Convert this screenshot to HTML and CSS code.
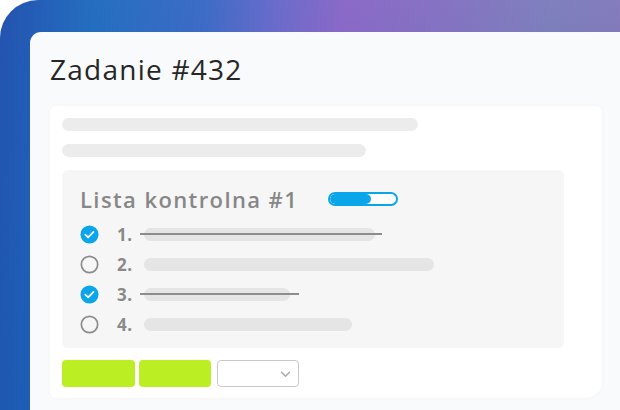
FILE: index.html
```html
<!DOCTYPE html>
<html lang="pl">
<head>
<meta charset="utf-8">
<link rel="stylesheet" href="styles.css">
</head>
<body>
<div class="bg">
  <div class="panel">
    <h1 class="title">Zadanie #432</h1>
    <div class="card">
      <div class="skel skel-1"></div>
      <div class="skel skel-2"></div>
      <div class="checklist">
        <div class="cl-head">
          <span class="cl-title">Lista kontrolna #1</span>
          <span class="progress"><span class="progress-fill"></span></span>
        </div>
        <ul class="items">
          <li class="item done">
            <span class="check"><svg viewBox="0 0 20 20" width="19" height="19"><circle cx="10" cy="10" r="9.5" fill="#0aa6e9"/><path d="M5.6 10.2l3 2.9 5.6-5.8" fill="none" stroke="#fff" stroke-width="1.8" stroke-linecap="round" stroke-linejoin="round"/></svg></span>
            <span class="num">1.</span>
            <span class="line w1"></span>
          </li>
          <li class="item">
            <span class="check"><svg viewBox="0 0 20 20" width="19" height="19"><circle cx="10" cy="10" r="8.6" fill="none" stroke="#8c8c8c" stroke-width="1.8"/></svg></span>
            <span class="num">2.</span>
            <span class="line w2"></span>
          </li>
          <li class="item done">
            <span class="check"><svg viewBox="0 0 20 20" width="19" height="19"><circle cx="10" cy="10" r="9.5" fill="#0aa6e9"/><path d="M5.6 10.2l3 2.9 5.6-5.8" fill="none" stroke="#fff" stroke-width="1.8" stroke-linecap="round" stroke-linejoin="round"/></svg></span>
            <span class="num">3.</span>
            <span class="line w3"></span>
          </li>
          <li class="item">
            <span class="check"><svg viewBox="0 0 20 20" width="19" height="19"><circle cx="10" cy="10" r="8.6" fill="none" stroke="#8c8c8c" stroke-width="1.8"/></svg></span>
            <span class="num">4.</span>
            <span class="line w4"></span>
          </li>
        </ul>
      </div>
      <div class="actions">
        <span class="btn"></span>
        <span class="btn btn-2"></span>
        <span class="select"><svg viewBox="0 0 12 8" width="11" height="7"><path d="M1.5 1.5l4.5 4.5 4.5-4.5" fill="none" stroke="#a8a8a8" stroke-width="1.6" stroke-linecap="round" stroke-linejoin="round"/></svg></span>
      </div>
    </div>
  </div>
</div>
</body>
</html>
```

FILE: styles.css
```css
* { box-sizing: border-box; }
html, body { margin: 0; padding: 0; background: #ffffff; }
body {
  width: 620px;
  height: 410px;
  overflow: hidden;
  font-family: "Open Sans", sans-serif;
}
.bg {
  width: 620px;
  height: 410px;
  border-top-left-radius: 38px;
  overflow: hidden;
  background:
    linear-gradient(180deg, rgba(255,255,255,0) 0%, rgba(10,40,140,0.25) 100%),
    linear-gradient(100deg, #2453b0 0%, #246fc0 14%, #3e6cc6 30%, #6a6ccb 40%, #8b6ac8 50%, #8574c2 65%, #7f80bd 80%, #8a78bb 100%);
  padding: 32px 0 0 30px;
  display: flex;
}
.panel {
  flex: 1;
  background: #f8fafc;
  border-top-left-radius: 11px;
  padding: 20px 18px 0 20px;
  display: flex;
  flex-direction: column;
}
.title {
  margin: 0;
  font-family: "Open Sans", sans-serif;
  font-weight: 400;
  font-size: 28px;
  line-height: 34px;
  color: #262626;
  letter-spacing: 1.25px;
}
.card {
  margin-top: 20px;
  background: #ffffff;
  border-radius: 6px 6px 16px 6px;
  box-shadow: 0 0 4px rgba(0,0,0,0.03);
  padding: 12px 12px 11px 12px;
  display: flex;
  flex-direction: column;
  height: 292px;
}
.skel {
  height: 13px;
  border-radius: 7px;
  background: #ececec;
}
.skel-1 { width: 356px; }
.skel-2 { width: 304px; margin-top: 13px; }
.checklist {
  margin-top: 13px;
  width: 502px;
  height: 178px;
  background: #f6f6f6;
  border-radius: 6px;
  padding: 14px 0 0 18px;
}
.cl-head {
  display: flex;
  align-items: center;
  height: 30px;
}
.cl-title {
  font-family: "Open Sans", sans-serif;
  font-weight: 600;
  font-size: 22px;
  color: #878787;
  letter-spacing: 1.4px;
}
.progress {
  margin-left: 30px;
  width: 70px;
  height: 14px;
  border: 2px solid #0aa6e9;
  border-radius: 7px;
  background: #fff;
  overflow: hidden;
  display: flex;
}
.progress-fill {
  width: 62%;
  background: #0aa6e9;
  border-radius: 5px;
}
.items {
  list-style: none;
  margin: 5px 0 0 0;
  padding: 0;
}
.item {
  display: flex;
  align-items: center;
  height: 30px;
}
.check { width: 19px; height: 19px; display: flex; }
.num {
  width: 27px;
  margin-left: 18px;
  font-family: "Open Sans", sans-serif;
  font-weight: 700;
  font-size: 17px;
  color: #8a8a8a;
  letter-spacing: 0.5px;
}
.line {
  position: relative;
  height: 13px;
  border-radius: 7px;
  background: #e5e5e5;
}
.w1 { width: 231px; }
.w2 { width: 290px; }
.w3 { width: 146px; }
.w4 { width: 208px; }
.done .line::after {
  content: "";
  position: absolute;
  left: -4px;
  right: -7px;
  top: 5px;
  height: 2px;
  background: #8d8d8d;
}
.w3.line::after { right: -9px; }
.actions {
  margin-top: auto;
  display: flex;
  height: 27px;
}
.btn {
  width: 73px;
  background: #bcee24;
  border-radius: 4px;
}
.btn-2 { width: 72px; margin-left: 4px; }
.select {
  margin-left: 6px;
  width: 82px;
  border: 1px solid #c9c9c9;
  border-radius: 4px;
  background: #fff;
  display: flex;
  align-items: center;
  justify-content: flex-end;
  padding-right: 7px;
  padding-top: 2px;
}
```
